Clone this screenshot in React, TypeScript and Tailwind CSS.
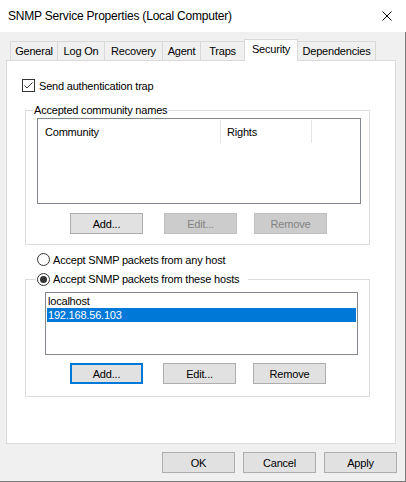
import React from "react";

type Kind = "normal" | "disabled" | "focused";

function Btn({ label, kind = "normal", cls = "" }: { label: string; kind?: Kind; cls?: string }) {
  const base = "w-[73px] h-[21px] flex items-center justify-center shrink-0 " + cls + " ";
  if (kind === "disabled")
    return <div className={base + "bg-[#cccccc] border border-[#bfbfbf] text-[#838383]"}>{label}</div>;
  if (kind === "focused")
    return <div className={base + "bg-[#e1e1e1] border-2 border-[#0078d7]"}>{label}</div>;
  return <div className={base + "bg-[#e1e1e1] border border-[#adadad]"}>{label}</div>;
}

function Tab({ label, w, selected = false }: { label: string; w: string; selected?: boolean }) {
  if (selected)
    return (
      <div className={w + " h-[22px] -ml-px bg-white border-t border-l border-r border-[#d9d9d9] flex items-center justify-center pb-[3px]"}>
        {label}
      </div>
    );
  return (
    <div className={w + " h-[19px] mb-px -ml-px first:ml-0 bg-[#f0f0f0] border-t border-l border-r border-[#d9d9d9] flex items-center justify-center"}>
      {label}
    </div>
  );
}

function Radio({ checked }: { checked: boolean }) {
  return (
    <span className="w-[13px] h-[13px] rounded-full border border-[#333333] bg-white flex items-center justify-center shrink-0">
      {checked && <span className="w-[7px] h-[7px] rounded-full bg-[#333333]" />}
    </span>
  );
}

export default function App() {
  return (
    <div className="w-[406px] h-[482px] bg-[#f0f0f0] flex flex-col font-['Liberation_Sans',Arial,sans-serif] text-[11px] leading-[16px] tracking-[-0.2px] text-black overflow-hidden">
      <div className="h-[32px] bg-white flex items-center justify-between pl-[8px] pr-[14px] shrink-0 text-[12px]">
        <span>SNMP Service Properties (Local Computer)</span>
        <svg width="10" height="10" viewBox="0 0 10 10">
          <path d="M0.5 0.5L9.5 9.5M9.5 0.5L0.5 9.5" stroke="#000" strokeWidth="1" fill="none" />
        </svg>
      </div>
      <div className="flex-1 flex flex-col border-r border-b border-[#7a7a7a]">
        <div className="pt-[7px] pl-[10px] h-[29px] flex items-end relative z-10 -mb-px">
          <Tab label="General" w="w-[48px]" />
          <Tab label="Log On" w="w-[48px]" />
          <Tab label="Recovery" w="w-[59px]" />
          <Tab label="Agent" w="w-[39px]" />
          <Tab label="Traps" w="w-[45px]" />
          <Tab label="Security" w="w-[54px]" selected />
          <Tab label="Dependencies" w="w-[79px]" />
        </div>
        <div className="ml-[6px] w-[390px] h-[384px] bg-white border border-[#d9d9d9] flex flex-col">
          <div className="ml-[15px] mt-[18px] h-[13px] flex items-center">
            <span className="w-[13px] h-[13px] border border-[#333333] bg-white flex items-center justify-center shrink-0">
              <svg width="11" height="11" viewBox="0 0 11 11">
                <path d="M1.5 5.5L4 8L9.5 2.5" stroke="#333333" strokeWidth="1" fill="none" />
              </svg>
            </span>
            <span className="ml-[4px]">Send authentication trap</span>
          </div>

          <fieldset className="ml-[18px] mt-[10px] w-[345px] border border-[#dcdcdc] pb-[10px] min-w-0">
            <legend className="ml-[7px] px-px leading-[16px]">Accepted community names</legend>
            <div className="ml-[11px] w-[324px] h-[86px] border border-[#828790] bg-white">
              <div className="flex h-[24px] pt-px">
                <div className="w-[183px] h-[23px] pl-[7px] border-r border-[#e5e5e5] flex items-center">Community</div>
                <div className="w-[91px] h-[23px] pl-[6px] border-r border-[#e5e5e5] flex items-center">Rights</div>
              </div>
            </div>
            <div className="flex mt-[9px]">
              <Btn label="Add..." cls="ml-[44px]" />
              <Btn label="Edit..." kind="disabled" cls="ml-[21px]" />
              <Btn label="Remove" kind="disabled" cls="ml-[17px]" />
            </div>
          </fieldset>

          <div className="ml-[30px] mt-[8px] h-[13px] flex items-center">
            <Radio checked={false} />
            <span className="ml-[3px]">Accept SNMP packets from any host</span>
          </div>

          <fieldset className="ml-[18px] mt-[5px] w-[345px] border border-[#dcdcdc] pb-[12px] min-w-0">
            <legend className="ml-[10px] pl-px pr-[9px] leading-[16px]">
              <span className="inline-flex items-center h-[16px] align-top">
                <Radio checked={true} />
                <span className="ml-[3px]">Accept SNMP packets from these hosts</span>
              </span>
            </legend>
            <div className="ml-[19px] mt-[5px] w-[313px] h-[63px] border border-[#828790] bg-white p-px flex flex-col">
              <div className="h-[14px] pl-px flex items-center">localhost</div>
              <div className="h-[14px] pl-px flex items-center bg-[#0078d7] text-white">192.168.56.103</div>
            </div>
            <div className="flex mt-[8px]">
              <Btn label="Add..." kind="focused" cls="ml-[44px]" />
              <Btn label="Edit..." cls="ml-[20px]" />
              <Btn label="Remove" cls="ml-[17px]" />
            </div>
          </fieldset>
        </div>
        <div className="flex justify-end gap-[8px] pr-[8px] mt-[8px]">
          <Btn label="OK" />
          <Btn label="Cancel" />
          <Btn label="Apply" />
        </div>
      </div>
    </div>
  );
}
